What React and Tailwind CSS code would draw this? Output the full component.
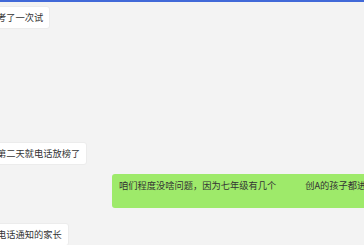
const font = { fontFamily: '"Noto Sans CJK SC", "Noto Sans", sans-serif' }

function Left({ children, className = '' }) {
  return (
    <div className={`ml-[-10px] self-start bg-white border border-[#ececec] rounded-[3px] px-[6px] py-[5px] text-[9.25px] leading-[11px] text-[#333] whitespace-nowrap ${className}`}>
      {children}
    </div>
  )
}

export default function App() {
  return (
    <div className="w-[364px] h-[245px] overflow-hidden bg-[#f3f3f3] flex flex-col" style={font}>
      <div className="h-[2px] bg-[#4169d8] shrink-0" />
      <Left className="mt-[4px]">考了一次试</Left>
      <Left className="mt-[113px]">第二天就电话放榜了</Left>
      {/* right-hand green message, runs past the edge */}
      <div className="mt-[9px] ml-[112px] w-[300px] shrink-0 bg-[#9eea6a] rounded-[3px] px-[7px] py-[6px] h-[34px] text-[9.25px] leading-[11px] text-[#333] whitespace-nowrap">
        咱们程度没啥问题，因为七年级有几个<span className="inline-block w-[29px]" />创A的孩子都进
      </div>
      <Left className="mt-[15px]">电话通知的家长</Left>
    </div>
  )
}
